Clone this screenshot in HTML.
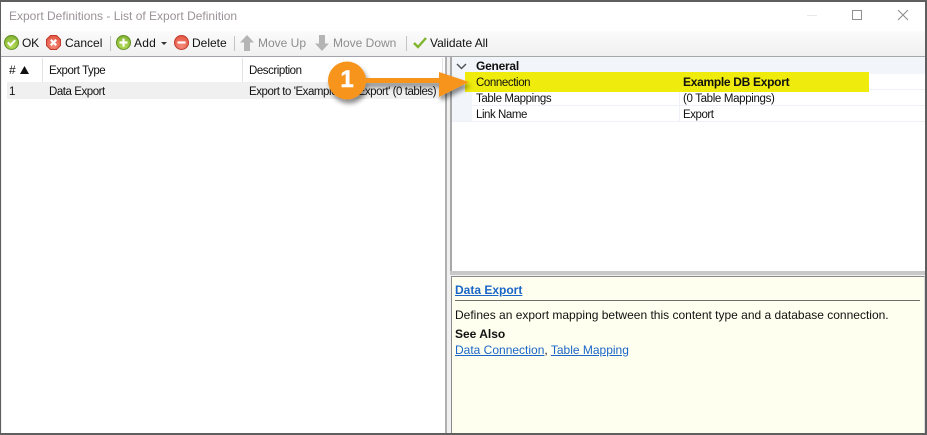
<!DOCTYPE html>
<html><head><meta charset="utf-8">
<style>
html,body{margin:0;padding:0;background:#f0f0f0}
#w{position:relative;width:927px;height:435px;overflow:hidden;background:#f0f0f0;font:12px "Liberation Sans",sans-serif;color:#111}
.a{position:absolute;white-space:nowrap}
.t{position:absolute;white-space:nowrap;line-height:14px;height:14px}
.n{font-size:11.5px;letter-spacing:-.45px;margin-top:1px}
.g{color:#8d8d8d}
a{color:#1a66c8;text-decoration:underline}
</style></head><body><div id="w">
<div class="a" style="left:0;top:0;width:927px;height:31px;background:#fff"></div>
<div class="a" style="left:0;top:31px;width:927px;height:25px;background:linear-gradient(#fbfbfb,#f1f0f0)"></div>
<div class="a" style="left:0;top:56px;width:927px;height:1px;background:#a3a3ad"></div>

<div class="t" style="left:9px;top:9px;color:#9a9298">Export Definitions - List of Export Definition</div>
<div class="a" style="left:807px;top:15px;width:10px;height:1px;background:#e8e8e8"></div>
<div class="a" style="left:852px;top:10px;width:8px;height:8px;border:1px solid #8f8f8f"></div>
<svg class="a" style="left:897px;top:9px" width="12" height="12"><path d="M1 1L11 11M11 1L1 11" stroke="#8a8a8a" stroke-width="1" fill="none"/></svg>

<!-- toolbar icons -->
<svg class="a" style="left:4px;top:35px" width="15" height="15"><defs><radialGradient id="gr" cx=".5" cy=".75" r=".8"><stop offset="0" stop-color="#b6de5c"/><stop offset="1" stop-color="#7fae2c"/></radialGradient><radialGradient id="rd" cx=".5" cy=".75" r=".8"><stop offset="0" stop-color="#f58a7a"/><stop offset="1" stop-color="#e2533f"/></radialGradient></defs><circle cx="7.5" cy="7.5" r="7" fill="url(#gr)" stroke="#5f8f22"/><path d="M3.8 7.5l2.6 2.7 4.8-5" stroke="#fff" stroke-width="2" fill="none"/></svg>
<div class="t" style="left:22px;top:36px;letter-spacing:-.2px">OK</div>
<svg class="a" style="left:46px;top:35px" width="15" height="15"><path d="M4.5.5h6l4 4v6l-4 4h-6l-4-4v-6z" fill="url(#rd)" stroke="#c0392b"/><path d="M4.8 4.8l5.4 5.4M10.2 4.8l-5.4 5.4" stroke="#fff" stroke-width="2.2" fill="none"/></svg>
<div class="t" style="left:65px;top:36px">Cancel</div>
<div class="a" style="left:110px;top:36px;width:1px;height:15px;background:#c4c4c4"></div>
<svg class="a" style="left:116px;top:35px" width="15" height="15"><circle cx="7.5" cy="7.5" r="7" fill="url(#gr)" stroke="#5f8f22"/><path d="M7.5 3.5v8M3.5 7.5h8" stroke="#fff" stroke-width="2.2" fill="none"/></svg>
<div class="t" style="left:134px;top:36px;letter-spacing:.2px">Add</div>
<svg class="a" style="left:161px;top:42px" width="6" height="3"><path d="M0 0h6L3 3z" fill="#333"/></svg>
<svg class="a" style="left:174px;top:35px" width="15" height="15"><circle cx="7.5" cy="7.5" r="7" fill="url(#rd)" stroke="#c0392b"/><path d="M3.5 7.5h8" stroke="#fff" stroke-width="2.2" fill="none"/></svg>
<div class="t" style="left:192px;top:36px">Delete</div>
<div class="a" style="left:234px;top:36px;width:1px;height:15px;background:#c4c4c4"></div>
<svg class="a" style="left:240px;top:35px" width="14" height="16"><path d="M7 0L14 7.5H10V16H4V7.5H0z" fill="#b4b4b4"/></svg>
<div class="t g" style="left:258px;top:36px">Move Up</div>
<svg class="a" style="left:315px;top:35px" width="14" height="16"><path d="M7 16L14 8.5H10V0H4V8.5H0z" fill="#b4b4b4"/></svg>
<div class="t g" style="left:333px;top:36px">Move Down</div>
<div class="a" style="left:406px;top:36px;width:1px;height:15px;background:#c4c4c4"></div>
<svg class="a" style="left:413px;top:36px" width="14" height="13"><path d="M1 7l4 4 8-9" stroke="#7fb52c" stroke-width="2.4" fill="none"/></svg>
<div class="t" style="left:430px;top:36px;letter-spacing:-.05px">Validate All</div>

<!-- left panel -->
<div class="a" style="left:2px;top:57px;width:443px;height:376px;background:#fff"></div>
<div class="a" style="left:445px;top:57px;width:2px;height:376px;background:#b0b0b0"></div>
<div class="a" style="left:42px;top:58px;width:1px;height:24px;background:#e3e3e3"></div>
<div class="a" style="left:242px;top:58px;width:1px;height:24px;background:#e3e3e3"></div>
<div class="a" style="left:442px;top:58px;width:1px;height:24px;background:#e3e3e3"></div>
<div class="a" style="left:7px;top:82px;width:436px;height:17px;background:#f0f0f0"></div>
<div class="t" style="left:9px;top:63px">#</div>
<svg class="a" style="left:20px;top:66px" width="9" height="8"><path d="M4.5 0L9 8H0z" fill="#111"/></svg>
<div class="t n" style="left:49px;top:63px">Export Type</div>
<div class="t n" style="left:249px;top:63px">Description</div>
<div class="t n" style="left:9px;top:84px;letter-spacing:0">1</div>
<div class="t n" style="left:49px;top:84px">Data Export</div>
<div class="t n" style="left:249px;top:84px">Export to 'Example DB Export' (0 tables)</div>

<!-- right property panel -->
<div class="a" style="left:450px;top:56px;width:477px;height:215px;background:#fff;box-sizing:border-box;border-left:2px solid #a8a8a8;border-top:1px solid #a8a8a8"></div>
<div class="a" style="left:452px;top:57px;width:473px;height:17px;background:#f2f6fb"></div>
<div class="a" style="left:452px;top:74px;width:20px;height:48px;background:#f2f6fb"></div>
<div class="a" style="left:472px;top:89px;width:453px;height:1px;background:#eef1f6"></div>
<div class="a" style="left:472px;top:105px;width:453px;height:1px;background:#eef1f6"></div>
<div class="a" style="left:452px;top:121px;width:473px;height:1px;background:#eef1f6"></div>
<div class="a" style="left:679px;top:74px;width:1px;height:48px;background:#eef1f6"></div>
<svg class="a" style="left:456px;top:63px" width="11" height="7"><path d="M1 1l4.5 4.5L10 1" stroke="#555" stroke-width="1.5" fill="none"/></svg>
<div class="t" style="left:476px;top:59px;font-weight:bold;letter-spacing:-.25px">General</div>
<div class="a" style="left:465px;top:72px;width:404px;height:20px;background:#efec0d"></div>
<div class="t n" style="left:476px;top:75px;letter-spacing:-.4px">Connection</div>
<div class="t" style="left:683px;top:75px;font-weight:bold;letter-spacing:-.3px">Example DB Export</div>
<div class="t n" style="left:476px;top:91px;letter-spacing:-.38px">Table Mappings</div>
<div class="t n" style="left:683px;top:91px;letter-spacing:-.34px">(0 Table Mappings)</div>
<div class="t n" style="left:476px;top:107px">Link Name</div>
<div class="t n" style="left:683px;top:107px">Export</div>

<!-- splitter -->
<div class="a" style="left:450px;top:271px;width:477px;height:4px;background:#c8c8c8"></div>
<!-- help -->
<div class="a" style="left:451px;top:276px;width:474px;height:157px;background:#ffffef;box-sizing:border-box;border:1px solid #8a8a8a;border-bottom:0;border-right:1px solid #ddd"></div>
<div class="t" style="left:455px;top:283px;font-weight:bold"><a>Data Export</a></div>
<div class="a" style="left:455px;top:300px;width:465px;height:1px;background:#6e6e6e"></div>
<div class="t" style="left:455px;top:308px">Defines an export mapping between this content type and a database connection.</div>
<div class="t" style="left:455px;top:327px;font-weight:bold">See Also</div>
<div class="t" style="left:455px;top:343px"><a>Data Connection</a>, <a>Table Mapping</a></div>

<!-- callout -->
<svg class="a" style="left:320px;top:55px" width="160" height="65">
<defs><filter id="s" x="-20%" y="-30%" width="140%" height="170%"><feDropShadow dx="2" dy="4" stdDeviation="2.5" flood-color="#000" flood-opacity=".45"/></filter></defs>
<g filter="url(#s)"><path d="M40 23H119V17L149 27L119 42V28H40z" fill="#f7941f"/><circle cx="27" cy="25.5" r="19" fill="#f7941f"/></g>
</svg>
<div class="a" style="left:327px;top:60px;width:40px;height:40px;text-align:center;font:bold 24px/40px 'Liberation Sans',sans-serif;color:#fff;-webkit-text-stroke:.5px #fff">1</div>

<!-- outer frame -->
<div class="a" style="left:0;top:0;width:927px;height:435px;box-sizing:border-box;border:solid #5f5f5f;border-width:2px 2px 2px 1px;pointer-events:none"></div>
</div></body></html>
